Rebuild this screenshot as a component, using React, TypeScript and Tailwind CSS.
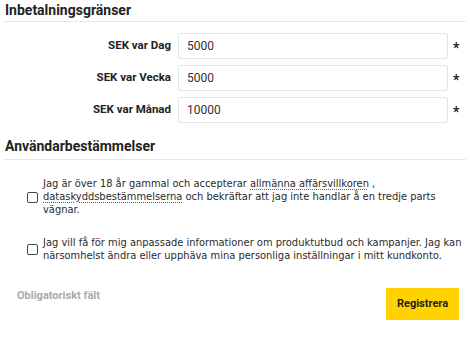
import React from "react";

const rows = [
  { label: "SEK var Dag", value: "5000" },
  { label: "SEK var Vecka", value: "5000" },
  { label: "SEK var Månad", value: "10000" },
];

export default function App() {
  return (
    <div className="w-[470px] h-[350px] bg-white px-[4px] text-[#222]" style={{ fontFamily: "Roboto, sans-serif" }}>
      <h2 className="text-[14px] leading-[18px] font-bold pt-[1px] pb-[2px] border-b border-[#e8e8e8] pl-[1px]">
        Inbetalningsgränser
      </h2>
      <div className="mt-[11px] flex flex-col gap-[6px]">
        {rows.map((r) => (
          <div key={r.label} className="flex items-center">
            <label className="w-[167px] text-right text-[11.5px] font-bold text-[#222]">{r.label}</label>
            <div className="ml-[7px] w-[270px] h-[26px] border border-[#e6e6e6] rounded-[2px] flex items-center pl-[8px] text-[12px] text-[#333]">
              {r.value}
            </div>
            <span className="ml-[5px] text-[14px] font-bold leading-none mt-[3px]">*</span>
          </div>
        ))}
      </div>
      <h2 className="mt-[14px] text-[14px] leading-[18px] font-bold pb-[4px] border-b border-[#e8e8e8] pl-[1px]">
        Användarbestämmelser
      </h2>
      <div
        className="pl-[23px] mt-[17px] flex flex-col gap-[20px] text-[11px] leading-[13px] text-[#2a2a2a]"
        style={{ fontFamily: '"DejaVu Sans Condensed", "DejaVu Sans", sans-serif', fontStretch: "condensed" }}
      >
        <div className="flex items-center">
          <span className="w-[11px] h-[11px] border-[1.5px] border-[#444] rounded-[2px] shrink-0 mt-[1px]" />
          <p className="ml-[5px] w-[424px]">
            Jag är över 18 år gammal och accepterar{" "}
            <span className="underline decoration-dotted decoration-[#666] underline-offset-2">allmänna affärsvillkoren</span> ,{" "}
            <span className="underline decoration-dotted decoration-[#666] underline-offset-2">dataskyddsbestämmelserna</span> och bekräftar att jag inte handlar å en tredje parts vägnar.
          </p>
        </div>
        <div className="flex items-center">
          <span className="w-[11px] h-[11px] border-[1.5px] border-[#444] rounded-[2px] shrink-0 mt-[1px]" />
          <p className="ml-[5px] w-[424px]">
            Jag vill få för mig anpassade informationer om produktutbud och kampanjer. Jag kan närsomhelst ändra eller upphäva mina personliga inställningar i mitt kundkonto.
          </p>
        </div>
      </div>
      <div className="mt-[26px] flex items-start justify-between pl-[13px] pr-[7px]">
        <span className="text-[11px] font-bold text-[#aaa]">Obligatoriskt fält</span>
        <button className="w-[73px] h-[32px] bg-[#ffd200] text-[11px] font-bold text-[#222]">Registrera</button>
      </div>
    </div>
  );
}
